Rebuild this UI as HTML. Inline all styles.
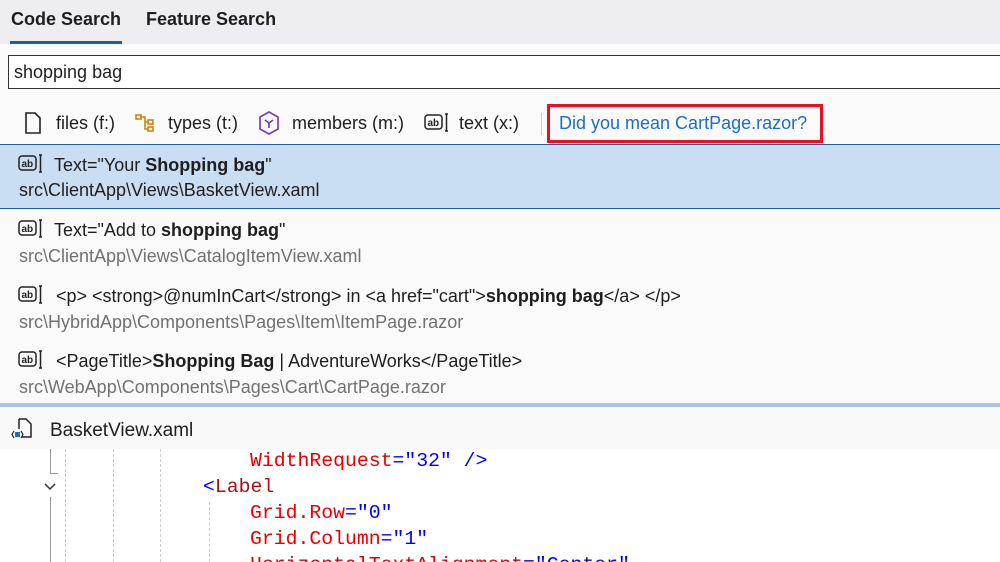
<!DOCTYPE html>
<html><head><meta charset="utf-8"><style>
*{margin:0;padding:0;box-sizing:border-box}
html,body{width:1000px;height:562px;overflow:hidden}
body{background:#fafafa;font-family:"Liberation Sans",sans-serif;color:#1e1e1e;position:relative}
.a{position:absolute;white-space:nowrap}
.t{font-size:18px}
.g{color:#717171}
.mono{font-family:"Liberation Mono",monospace;font-size:19.8px}
.r{color:#e50000}.b{color:#0000ff}.m{color:#a31515}
.ic{position:absolute}
</style></head><body>
<div class="a" style="left:0;top:0;width:1000px;height:44px;background:#eeeef2"></div>
<div class="a" style="left:11px;top:9px;font-size:18px;font-weight:bold">Code Search</div>
<div class="a" style="left:146px;top:9px;font-size:18px;font-weight:bold">Feature Search</div>
<div class="a" style="left:10px;top:41px;width:112px;height:3px;background:#1f5f99"></div>
<div class="a" style="left:8px;top:55px;width:1000px;height:34px;border:1px solid #333;background:#fff"></div>
<div class="a t" style="left:14px;top:62px">shopping bag</div>

<svg class="ic" style="left:24px;top:112px" width="18" height="22" viewBox="0 0 18 22"><path d="M2 1h9l5 5v15H2z" fill="none" stroke="#222" stroke-width="1.6"/></svg>
<div class="a t" style="left:56px;top:113px">files (f:)</div>
<svg class="ic" style="left:135px;top:113px" width="22" height="20" viewBox="0 0 22 20"><g fill="none" stroke="#c8860c" stroke-width="1.6"><rect x="1" y="2" width="5" height="4"/><rect x="13" y="7" width="5" height="4"/><rect x="13" y="14" width="5" height="4"/><path d="M6 4h4v5h3M10 9v7h3"/></g></svg>
<div class="a t" style="left:168px;top:113px">types (t:)</div>
<svg class="ic" style="left:258px;top:111px" width="22" height="24" viewBox="0 0 22 24"><g fill="none" stroke="#7a3fb8" stroke-width="1.7"><path d="M11 1l9 5v12l-9 5-9-5V6z"/><path d="M7 9l4 3 4-3M11 12v5"/></g></svg>
<div class="a t" style="left:292px;top:113px">members (m:)</div>
<svg class="ic" style="left:424px;top:113px" width="26" height="20" viewBox="0 0 26 20"><g fill="none" stroke="#222" stroke-width="1.5"><rect x="1" y="2" width="17" height="14" rx="3"/><path d="M21 1h3M22.5 1v17M21 18h3"/></g><text x="3.5" y="13" font-size="10" font-family="Liberation Sans" font-weight="bold" fill="#222">ab</text></svg>
<div class="a t" style="left:459px;top:113px">text (x:)</div>
<div class="a" style="left:541px;top:113px;width:1px;height:22px;background:#ccc"></div>
<div class="a" style="left:547px;top:104px;width:276px;height:39px;border:3px solid #e81123"></div>
<div class="a t" style="left:559px;top:113px;color:#1a6fc4">Did you mean CartPage.razor?</div>

<div class="a" style="left:0;top:144px;width:1000px;height:65px;background:#c9ddf3;border-top:1px solid #1e5fa0;border-bottom:1px solid #1e5fa0"></div>

<svg class="ic" style="left:18px;top:154px" width="26" height="20" viewBox="0 0 26 20"><g fill="none" stroke="#222" stroke-width="1.5"><rect x="1" y="2" width="17" height="14" rx="3"/><path d="M21 1h3M22.5 1v17M21 18h3"/></g><text x="3.5" y="13" font-size="10" font-family="Liberation Sans" font-weight="bold" fill="#222">ab</text></svg>
<div class="a t" style="left:54px;top:155px">Text="Your <b>Shopping bag</b>"</div>
<div class="a t" style="left:19px;top:180px">src\ClientApp\Views\BasketView.xaml</div>

<svg class="ic" style="left:18px;top:219px" width="26" height="20" viewBox="0 0 26 20"><g fill="none" stroke="#222" stroke-width="1.5"><rect x="1" y="2" width="17" height="14" rx="3"/><path d="M21 1h3M22.5 1v17M21 18h3"/></g><text x="3.5" y="13" font-size="10" font-family="Liberation Sans" font-weight="bold" fill="#222">ab</text></svg>
<div class="a t" style="left:54px;top:220px">Text="Add to <b>shopping bag</b>"</div>
<div class="a t g" style="left:19px;top:246px">src\ClientApp\Views\CatalogItemView.xaml</div>

<svg class="ic" style="left:18px;top:285px" width="26" height="20" viewBox="0 0 26 20"><g fill="none" stroke="#222" stroke-width="1.5"><rect x="1" y="2" width="17" height="14" rx="3"/><path d="M21 1h3M22.5 1v17M21 18h3"/></g><text x="3.5" y="13" font-size="10" font-family="Liberation Sans" font-weight="bold" fill="#222">ab</text></svg>
<div class="a t" style="left:56px;top:286px">&lt;p&gt; &lt;strong&gt;@numInCart&lt;/strong&gt; in &lt;a href="cart"&gt;<b>shopping bag</b>&lt;/a&gt; &lt;/p&gt;</div>
<div class="a t g" style="left:19px;top:312px">src\HybridApp\Components\Pages\Item\ItemPage.razor</div>

<svg class="ic" style="left:18px;top:350px" width="26" height="20" viewBox="0 0 26 20"><g fill="none" stroke="#222" stroke-width="1.5"><rect x="1" y="2" width="17" height="14" rx="3"/><path d="M21 1h3M22.5 1v17M21 18h3"/></g><text x="3.5" y="13" font-size="10" font-family="Liberation Sans" font-weight="bold" fill="#222">ab</text></svg>
<div class="a t" style="left:56px;top:351px">&lt;PageTitle&gt;<b>Shopping Bag</b> | AdventureWorks&lt;/PageTitle&gt;</div>
<div class="a t g" style="left:19px;top:377px">src\WebApp\Components\Pages\Cart\CartPage.razor</div>

<div class="a" style="left:0;top:403px;width:1000px;height:4px;background:#a9c4de"></div>
<div class="a" style="left:0;top:407px;width:1000px;height:42px;background:#f9f9f9"></div>
<svg class="ic" style="left:11px;top:417px" width="24" height="24" viewBox="0 0 24 24"><path d="M8 2h7l5 5v13h-9" fill="none" stroke="#222" stroke-width="1.5"/><path d="M8 2v10" stroke="#222" stroke-width="1.5"/><rect x="4" y="15" width="5" height="5" fill="#1a6fc4"/><path d="M3 14l-2 3.5 2 3.5M10 14l2 3.5-2 3.5" fill="none" stroke="#222" stroke-width="1.2"/></svg>
<div class="a t" style="left:50px;top:420px;font-size:19px">BasketView.xaml</div>
<div class="a" style="left:0;top:449px;width:1000px;height:113px;background:#fff"></div>

<div class="a" style="left:50px;top:449px;width:1px;height:24px;background:#999"></div>
<div class="a" style="left:50px;top:473px;width:8px;height:1px;background:#999"></div>
<svg class="ic" style="left:43px;top:482px" width="14" height="10" viewBox="0 0 14 10"><path d="M2 2l5 5 5-5" fill="none" stroke="#333" stroke-width="1.5"/></svg>
<div class="a" style="left:50px;top:497px;width:1px;height:65px;background:#999"></div>
<div class="a" style="left:65px;top:449px;height:113px;border-left:1px dashed #ccc"></div>
<div class="a" style="left:113px;top:449px;height:113px;border-left:1px dashed #ccc"></div>
<div class="a" style="left:160px;top:449px;height:113px;border-left:1px dashed #ccc"></div>
<div class="a" style="left:209px;top:502px;height:60px;border-left:1px dashed #ccc"></div>

<div class="a mono" style="left:250px;top:450px"><span class="r">WidthRequest</span><span class="b">="32" /&gt;</span></div>
<div class="a mono" style="left:203px;top:476px"><span class="b">&lt;</span><span class="m">Label</span></div>
<div class="a mono" style="left:250px;top:502px"><span class="r">Grid.Row</span><span class="b">="0"</span></div>
<div class="a mono" style="left:250px;top:528px"><span class="r">Grid.Column</span><span class="b">="1"</span></div>
<div class="a mono" style="left:250px;top:554px"><span class="r">HorizontalTextAlignment</span><span class="b">="Center"</span></div>
</body></html>
